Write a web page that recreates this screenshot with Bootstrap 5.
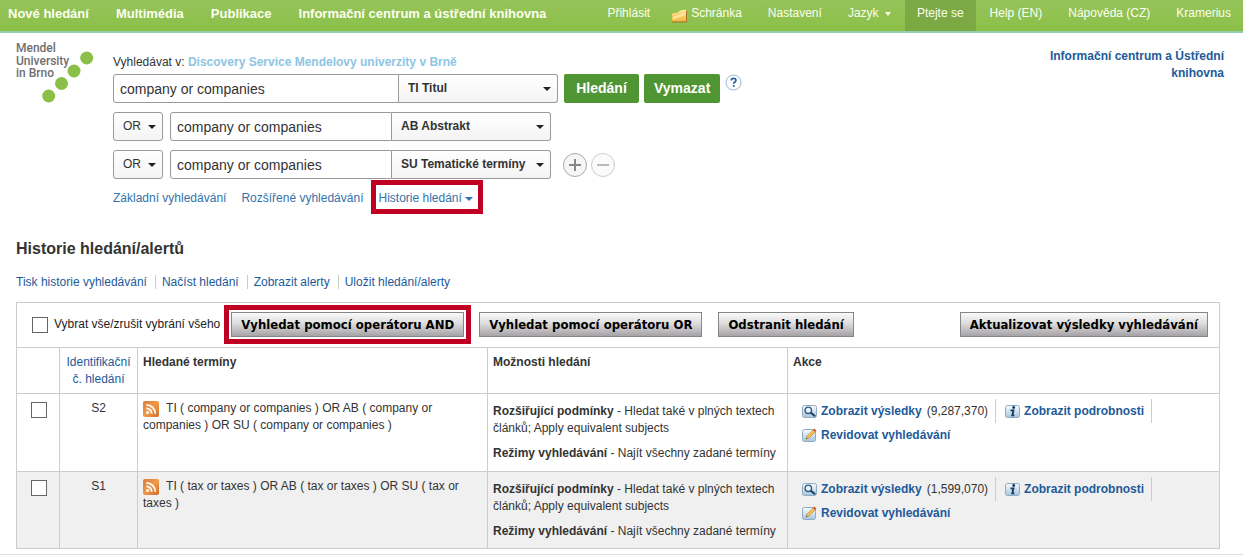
<!DOCTYPE html>
<html lang="cs">
<head>
<meta charset="utf-8">
<meta name="viewport" content="width=device-width, initial-scale=1">
<title>Historie hledání/alertů</title>
<link href="https://cdn.jsdelivr.net/npm/bootstrap@5.3.0/dist/css/bootstrap.min.css" rel="stylesheet">
<script src="https://cdn.jsdelivr.net/npm/bootstrap@5.3.0/dist/js/bootstrap.bundle.min.js" defer></script>
<style>
  body { font-family: "Liberation Sans", Arial, sans-serif; font-size: 12px; line-height: 17px; color: #333; background: #fff; }
  a { color: #1d5a9a; text-decoration: none; }
  a:hover { text-decoration: underline; }
  .topbar { background: linear-gradient(#96c35b, #8bc048); border-bottom: 2px solid #93cfae; height: 33px; }
  .topbar a { color: #fbfff0; white-space: nowrap; }
  .main-nav { gap: 27px; padding: 5px 8px; font-size: 13px; font-weight: bold; }
  .user-nav { gap: 2px; }
  .user-nav a { padding: 5px 12px 9px; }
  .user-nav a.current { background: #7da945; }
  .tri { display: inline-block; border: 4px solid transparent; border-top-color: currentColor; border-bottom: 0; vertical-align: middle; }
  .tri-s { border-width: 4px 3px 0; margin-left: 3px; }
  .page { padding: 8px 23px 5px 16px; }
  .logo { width: 97px; flex: none; }
  .logo text { font: 500 12px Roboto, sans-serif; fill: #6f6f6f; }
  .search { padding-top: 13px; }
  .service { color: #8cc6e4; }
  .fields { gap: 9px; margin-top: 3px; }
  .fld, .pick { height: 29px; border: 1px solid #999; color: #333; }
  .fld { width: 222px; padding: 0 6px; font-size: 14px; border-radius: 3px 0 0 3px; }
  .fld-lg { width: 286px; }
  .pick { appearance: none; font-weight: bold; font-size: 12px; width: 159px; padding: 0 24px 0 9px; border-left: 0; border-radius: 0 3px 3px 0;
    background: url("data:image/svg+xml,%3Csvg xmlns='http://www.w3.org/2000/svg' width='8' height='4'%3E%3Cpath d='M0 0h8L4 4z' fill='%23222'/%3E%3C/svg%3E") no-repeat right 6px center, linear-gradient(#fff, #f4f4f4); }
  .pick-op { width: 50px; font-weight: normal; padding-right: 14px; border-left: 1px solid #999; border-radius: 3px; margin-right: 7px; }
  .acts-main { gap: 5px; margin-left: 6px; }
  .go { height: 29px; min-width: 75px; padding: 0 10px; border: 0; border-radius: 2px; background: #4f9534; color: #fff; font-size: 14px; font-weight: bold; }
  .round { border: 0; padding: 0; background: none; line-height: 0; }
  .modes { gap: 15px; margin-top: 1px; }
  .modes a { color: #3273ac; padding-top: 2px; }
  .callout { border: 5px solid #c00022; padding: 2px; }
  .modes .callout { padding: 5px 5px 2px 2px; margin-left: -7px; }
  .library { width: 200px; padding: 7px 0 0; text-align: right; font-weight: bold; margin-right: -4px; }
  h1 { font-size: 16px; line-height: 20px; font-weight: bold; margin: 25px 0 16px; }
  .tools a { padding: 0 8px 0 6px; line-height: 14px; border-right: 1px solid #ccc; }
  .tools a:first-child { padding-left: 0; }
  .tools a:last-child { border: 0; }
  .bulk { margin-top: 13px; border: 1px solid #ccc; border-bottom: 0; padding: 2px 11px 3px 15px; color: #222; }
  .bulk label { margin: 0 4px 0 6px; }
  .box { appearance: none; width: 16px; height: 16px; border: 1px solid #666; background: #fff; margin: 0; display: block; }
  .box:checked { background: #1d5a9a; }
  .grey { height: 25px; padding: 0 9px 1px; border: 1px solid #868686; background: linear-gradient(#fafafa, #ddd 45%, #a6a2a6); color: #000; font: bold 13px "DejaVu Sans Condensed", "DejaVu Sans", sans-serif; white-space: nowrap; }
  .history { table-layout: fixed; border-collapse: collapse; }
  .history th, .history td { border: 1px solid #ccc; vertical-align: top; padding: 6px 5px; }
  .history th { height: 45px; padding-bottom: 5px; }
  .history td { height: 78px; }
  .history tbody tr:last-child { background: #f0f0f0; }
  .history tbody tr:last-child td { height: 77px; }
  .history .tick { padding: 8px 14px; }
  .history td.opts { padding-top: 9px; }
  .history td.acts { padding: 5px 14px; }
  .act { height: 24px; font-weight: bold; display: inline-flex; align-items: center; gap: 4px; }
  .sep { display: flex; align-items: center; gap: 5px; border-right: 1px solid #ccc; padding-right: 7px; }
  .sep + .sep { padding-left: 9px; }
  .foot { height: 1px; background: #ddd; }
</style>
</head>
<body>
<svg width="0" height="0" class="position-absolute" aria-hidden="true">
  <defs>
    <linearGradient id="blue" x2="0" y2="1"><stop stop-color="#fafdff"/><stop offset="1" stop-color="#a5c5df"/></linearGradient>
    <linearGradient id="orange" x2="1" y2="1"><stop stop-color="#d97b39"/><stop offset=".5" stop-color="#f09a48"/><stop offset="1" stop-color="#d36a28"/></linearGradient>
    <linearGradient id="gold" x2="0" y2="1"><stop stop-color="#ffe9a0"/><stop offset="1" stop-color="#f3b73c"/></linearGradient>
  </defs>
  <symbol id="rss" viewBox="0 0 16 16"><rect width="16" height="16" rx="2" fill="url(#orange)"/><circle cx="4.600" cy="11.500" r="1.500" fill="#fff"/><path d="M3.300 7.300a5.500 5.500 0 0 1 5.500 5.500M3.300 3.800a9 9 0 0 1 9 9" fill="none" stroke="#fff" stroke-width="1.700"/></symbol>
  <symbol id="lens" viewBox="0 0 15 13"><rect x=".5" y=".5" width="14" height="12" rx="2" fill="url(#blue)" stroke="#8daac2"/><circle cx="6.300" cy="5.300" r="3.200" fill="#e8f4fc" stroke="#31597d" stroke-width="1.400"/><path d="M8.600 7.600l4.600 3.600" stroke="#24435f" stroke-width="2"/></symbol>
  <symbol id="info" viewBox="0 0 15 13"><rect x=".5" y=".5" width="14" height="12" rx="2" fill="url(#blue)" stroke="#8daac2"/><circle cx="8.700" cy="2.500" r="1.400" fill="#15395f"/><path d="M5.500 5.300h3L7.300 10.300h2" fill="none" stroke="#15395f" stroke-width="1.800"/></symbol>
  <symbol id="edit" viewBox="0 0 15 14"><rect x=".5" y="1.500" width="13" height="12" rx="2" fill="url(#blue)" stroke="#8daac2"/><path d="M4 11l1-3 6-6 2 2-6 6z" fill="#f1c04d" stroke="#b68a35" stroke-width=".6"/><path d="M11 2l1.400-1.400 2 2L13 4z" fill="#d4543b"/><path d="M4 11l.5-1.500 1 1z" fill="#444"/></symbol>
</svg>

<header class="topbar d-flex justify-content-between">
  <nav class="main-nav d-flex" aria-label="Hlavní">
    <a href="#">Nové hledání</a><a href="#">Multimédia</a><a href="#">Publikace</a><a href="#">Informační centrum a ústřední knihovna</a>
  </nav>
  <nav class="user-nav d-flex" aria-label="Uživatel">
    <a href="#">Přihlásit</a>
    <a href="#" class="d-flex gap-1 ps-2"><svg width="15" height="14" viewBox="0 0 15 14" class="mt-1" aria-hidden="true"><path d="M0 12.500V4.500l6-1L8 1.500l6-1v12z" fill="url(#gold)"/><path d="M1 8l12-4v2L1 11z" fill="#fff3c4" opacity=".6"/><path d="M0 13h14.500V2" fill="none" stroke="#a9762a"/></svg>Schránka</a>
    <a href="#">Nastavení</a>
    <a href="#">Jazyk <span class="tri tri-s"></span></a>
    <a href="#" class="current">Ptejte se</a>
    <a href="#">Help (EN)</a>
    <a href="#">Nápověda (CZ)</a>
    <a href="#">Kramerius</a>
  </nav>
</header>

<main class="page">
  <div class="d-flex">
    <div class="logo">
      <svg width="80" height="64" viewBox="0 0 80 64" role="img" aria-label="Mendel University in Brno">
        <text x="0" y="11">Mendel</text><text x="0" y="24">University</text><text x="0" y="36">in Brno</text>
        <g fill="#8bc048"><circle cx="70.700" cy="17" r="6.500"/><circle cx="58" cy="30" r="6.500"/><circle cx="45.500" cy="42.500" r="6.500"/><circle cx="32.700" cy="55" r="6.500"/></g>
      </svg>
    </div>
    <form class="search flex-grow-1">
      <div>Vyhledávat v: <b class="service">Discovery Service Mendelovy univerzity v Brně</b></div>
      <div class="fields d-flex flex-column">
        <div class="d-flex">
          <input class="fld fld-lg" type="text" value="company or companies" aria-label="Hledaný výraz 1">
          <select class="pick" aria-label="Pole 1"><option>TI Titul</option></select>
          <div class="acts-main d-flex align-items-start">
            <button class="go" type="submit">Hledání</button>
            <button class="go" type="reset">Vymazat</button>
            <button class="round" type="button" aria-label="Nápověda">
              <svg width="17" height="17" viewBox="0 0 17 17"><circle cx="8.500" cy="8.500" r="7.500" fill="#fff" stroke="#9bb6d0"/><path d="M6.300 6.600c0-3 4.600-3 4.600-.3 0 1.700-2.200 1.700-2.200 3.500M8.700 11v1.800" fill="none" stroke="#2b5f9b" stroke-width="1.800"/></svg>
            </button>
          </div>
        </div>
        <div class="d-flex">
          <select class="pick pick-op" aria-label="Operátor 2"><option>OR</option></select>
          <input class="fld" type="text" value="company or companies" aria-label="Hledaný výraz 2">
          <select class="pick" aria-label="Pole 2"><option>AB Abstrakt</option></select>
        </div>
        <div class="d-flex">
          <select class="pick pick-op" aria-label="Operátor 3"><option>OR</option></select>
          <input class="fld" type="text" value="company or companies" aria-label="Hledaný výraz 3">
          <select class="pick" aria-label="Pole 3"><option>SU Tematické termíny</option></select>
          <div class="d-flex align-items-center gap-1 ms-2 ps-1">
            <button class="round" type="button" aria-label="Přidat řádek"><svg width="24" height="24" viewBox="0 0 24 24"><circle cx="12" cy="12" r="11.500" fill="#f6f6f6" stroke="#aaa"/><path d="M12 6v12M6 12h12" stroke="#888" stroke-width="2"/></svg></button>
            <button class="round" type="button" aria-label="Odebrat řádek"><svg width="24" height="24" viewBox="0 0 24 24"><circle cx="12" cy="12" r="11.500" fill="#fbfbfb" stroke="#ccc"/><path d="M6 12h12" stroke="#bbb" stroke-width="2"/></svg></button>
          </div>
        </div>
      </div>
      <div class="modes d-flex align-items-center">
        <a href="#">Základní vyhledávání</a><a href="#">Rozšířené vyhledávání</a>
        <a href="#" class="callout">Historie hledání <span class="tri"></span></a>
      </div>
    </form>
    <div class="library"><a href="#">Informační centrum a Ústřední knihovna</a></div>
  </div>

  <h1>Historie hledání/alertů</h1>
  <div class="tools d-flex"><a href="#">Tisk historie vyhledávání</a><a href="#">Načíst hledání</a><a href="#">Zobrazit alerty</a><a href="#">Uložit hledání/alerty</a></div>

  <div class="bulk d-flex align-items-center">
    <input class="box" type="checkbox" id="all"><label for="all" class="text-nowrap">Vybrat vše/zrušit vybrání všeho</label>
    <div class="callout me-2"><button class="grey d-block" type="button">Vyhledat pomocí operátoru AND</button></div>
    <button class="grey me-3" type="button">Vyhledat pomocí operátoru OR</button>
    <button class="grey" type="button">Odstranit hledání</button>
    <button class="grey ms-auto" type="button">Aktualizovat výsledky vyhledávání</button>
  </div>
  <table class="history w-100">
    <colgroup><col style="width:43px"><col style="width:78px"><col style="width:350px"><col style="width:300px"><col></colgroup>
    <thead>
      <tr><th></th><th class="text-center fw-normal"><a href="#">Identifikační č. hledání</a></th><th>Hledané termíny</th><th>Možnosti hledání</th><th>Akce</th></tr>
    </thead>
    <tbody>
      <tr>
        <td class="tick"><input class="box" type="checkbox" aria-label="S2"></td>
        <td class="text-center">S2</td>
        <td class="pe-5"><svg width="16" height="16" class="me-1 align-text-top" aria-hidden="true"><use href="#rss"/></svg> TI ( company or companies ) OR AB ( company or companies ) OR SU ( company or companies )</td>
        <td class="opts"><div class="mb-2"><b>Rozšiřující podmínky</b> - Hledat také v plných textech článků; Apply equivalent subjects</div><div><b>Režimy vyhledávání</b> - Najít všechny zadané termíny</div></td>
        <td class="acts">
          <div class="d-flex"><div class="sep"><a class="act" href="#"><svg width="15" height="13" aria-hidden="true"><use href="#lens"/></svg>Zobrazit výsledky</a><span>(9,287,370)</span></div><div class="sep"><a class="act" href="#"><svg width="15" height="13" aria-hidden="true"><use href="#info"/></svg>Zobrazit podrobnosti</a></div></div>
          <a class="act" href="#"><svg width="15" height="14" aria-hidden="true"><use href="#edit"/></svg>Revidovat vyhledávání</a>
        </td>
      </tr>
      <tr>
        <td class="tick"><input class="box" type="checkbox" aria-label="S1"></td>
        <td class="text-center">S1</td>
        <td class="pe-4"><svg width="16" height="16" class="me-1 align-text-top" aria-hidden="true"><use href="#rss"/></svg> TI ( tax or taxes ) OR AB ( tax or taxes ) OR SU ( tax or taxes )</td>
        <td class="opts"><div class="mb-2"><b>Rozšiřující podmínky</b> - Hledat také v plných textech článků; Apply equivalent subjects</div><div><b>Režimy vyhledávání</b> - Najít všechny zadané termíny</div></td>
        <td class="acts">
          <div class="d-flex"><div class="sep"><a class="act" href="#"><svg width="15" height="13" aria-hidden="true"><use href="#lens"/></svg>Zobrazit výsledky</a><span>(1,599,070)</span></div><div class="sep"><a class="act" href="#"><svg width="15" height="13" aria-hidden="true"><use href="#info"/></svg>Zobrazit podrobnosti</a></div></div>
          <a class="act" href="#"><svg width="15" height="14" aria-hidden="true"><use href="#edit"/></svg>Revidovat vyhledávání</a>
        </td>
      </tr>
    </tbody>
  </table>
</main>
<div class="foot"></div>
</body>
</html>
